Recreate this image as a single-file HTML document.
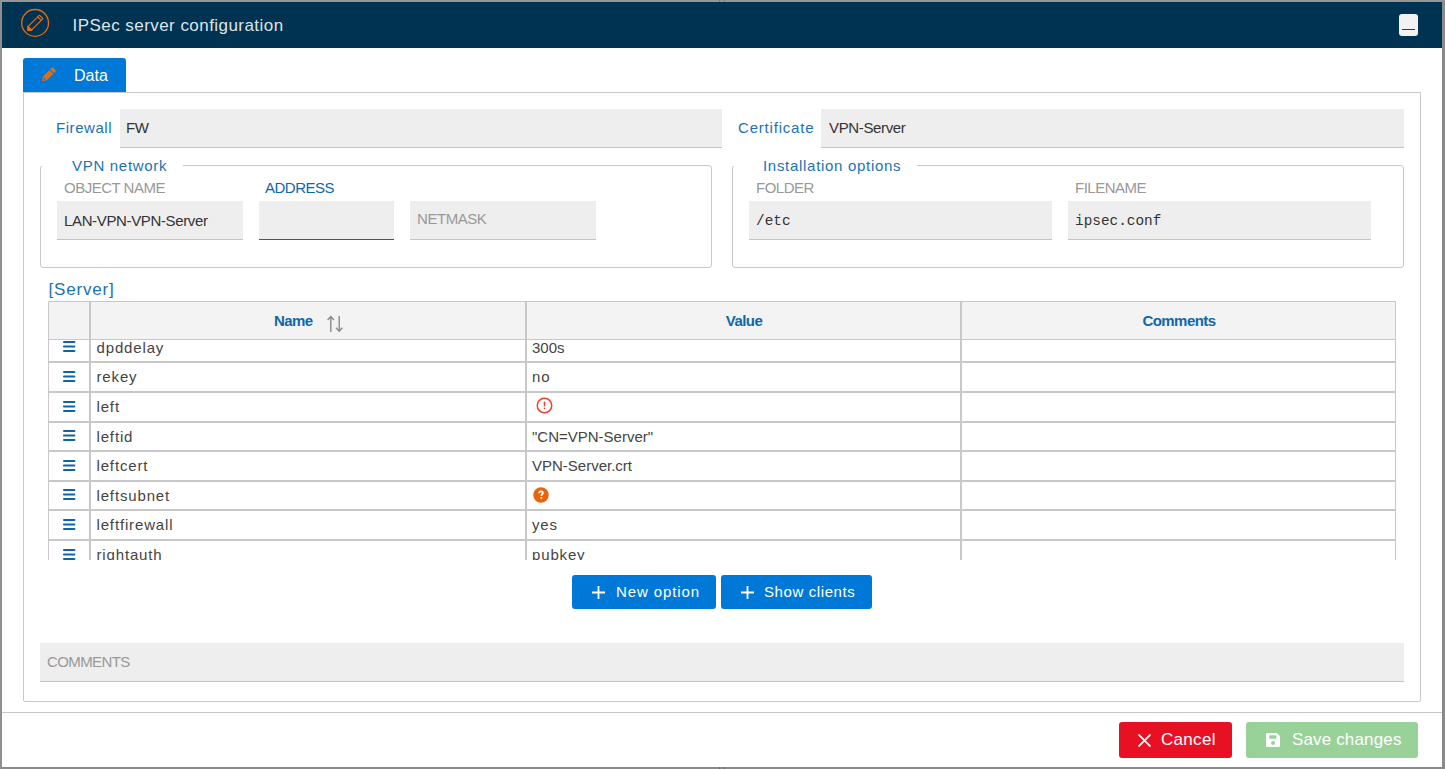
<!DOCTYPE html>
<html><head><meta charset="utf-8">
<style>
*{box-sizing:border-box;margin:0;padding:0}
html,body{width:1445px;height:769px;overflow:hidden;background:#fff;font-family:"Liberation Sans",sans-serif}
.abs{position:absolute}
#frame{position:absolute;left:0;top:0;width:1445px;height:769px;border-left:2px solid #8f8f8f;border-top:2px solid #959595;border-right:3px solid #8a8a8a;border-bottom:2px solid #8a8a8a;background:#fff}
#hdr{position:absolute;left:2px;top:2px;width:1440px;height:46px;background:#003252}
.title{position:absolute;left:72.5px;top:16px;color:#dfe4e8;font-size:17px;letter-spacing:0.45px;white-space:nowrap}
.minbtn{position:absolute;left:1397px;top:12px;width:19px;height:22px;background:#f2f2f2;border-radius:3px}
.minbtn i{position:absolute;left:3px;top:14.5px;width:13px;height:1.5px;background:#3a3a3a}
.tab{position:absolute;left:23px;top:58px;width:103px;height:34px;background:#0078d7;border-radius:3px 3px 0 0;color:#fff;font-size:16px}
.panel{position:absolute;left:23px;top:92px;width:1398px;height:610px;border:1px solid #c8c8c8;border-radius:0 0 2px 2px}
.lbl{position:absolute;color:#1a73b3;font-size:15px;white-space:nowrap}
.inp{position:absolute;background:#eee;border-bottom:1px solid #c4c4c4;font-size:15px;letter-spacing:-0.36px;color:#333;white-space:nowrap}
.inp.mono{font-size:14.4px;letter-spacing:0}
.fs{position:absolute;border:1px solid #c8c8c8;border-radius:3px}
.legend{position:absolute;background:#fff;color:#1a73b3;font-size:15px;letter-spacing:0.7px;white-space:nowrap;height:9px;line-height:17px;overflow:visible}
.sm{position:absolute;color:#999;font-size:15px;letter-spacing:-0.5px;white-space:nowrap}
.mono{font-family:"Liberation Mono",monospace}
.thead{position:absolute;left:48px;top:301px;width:1348px;height:39px;background:#f3f3f3;border:1px solid #c8c8c8}
.th{position:absolute;top:-1px;height:37px;color:#0e67ab;font-weight:bold;font-size:15px;letter-spacing:-0.55px;text-align:center;line-height:39px}
.vsep{position:absolute;width:2px;background:#c8c8c8}
.tbody{position:absolute;left:48px;top:340px;width:1348px;height:219.5px;overflow:hidden;border-left:1px solid #c8c8c8;border-right:1px solid #c8c8c8}
.row{position:absolute;left:0;width:1346px;height:29.62px;border-top:2px solid #c8c8c8}
.ham{position:absolute;left:14px;top:7.6px;fill:#0d64ab}
.ham i{display:block;height:1.7px;background:#0f64aa;margin-bottom:3px}
.cn{position:absolute;left:47.5px;top:4px;font-size:15px;letter-spacing:0.85px;color:#444;white-space:nowrap;line-height:20px}
.cv{position:absolute;left:483px;top:4px;font-size:15px;color:#444;white-space:nowrap;line-height:20px}
.cv.lc{letter-spacing:0.85px}
.btn{position:absolute;border-radius:3px;color:#fff;white-space:nowrap}
</style></head><body>
<div id="frame"></div>
<div id="hdr"></div>
<div class="abs" style="left:719px;top:0;width:1px;height:2px;background:#7a7a7a"></div>
<div class="abs" style="left:724px;top:0;width:1px;height:2px;background:#7a7a7a"></div>
<div class="abs" style="left:719px;top:767px;width:1px;height:2px;background:#6e6e6e"></div>
<div class="abs" style="left:724px;top:767px;width:1px;height:2px;background:#6e6e6e"></div>
<svg class="abs" style="left:0;top:0" width="60" height="48" viewBox="0 0 60 48">
  <circle cx="35.1" cy="22.9" r="13.4" fill="none" stroke="#eb6a0a" stroke-width="1.3"/>
  <g transform="translate(35.1,23) rotate(-45)">
    <path d="M-7.3,-2.5 H8 a0.6,0.6 0 0 1 0.6,0.6 V1.9 a0.6,0.6 0 0 1 -0.6,0.6 H-7.3 Z" fill="none" stroke="#eb6a0a" stroke-width="1.2"/>
    <path d="M6.1,-2.5 V2.5" stroke="#eb6a0a" stroke-width="1.1"/>
    <path d="M-7.3,-3.9 V3.9 L-11.2,0 Z" fill="#eb6a0a"/>
  </g>
</svg>
<div class="title">IPSec server configuration</div>
<div class="minbtn" style="left:1399px;top:14px"><i></i></div>
<div class="tab">
  <svg class="abs" style="left:0;top:0" width="50" height="34" viewBox="23 58 50 34">
    <g transform="translate(48.85,74.45) rotate(-45)">
      <path d="M-9.7,0 L-5.3,-2.7 H3.6 V2.7 H-5.3 Z" fill="#eb6a0a"/>
      <path d="M-7.7,0 L-5.6,-1.2 V1.2 Z" fill="#0078d7"/>
      <path d="M4.6,-2.7 H6.6 Q7.9,-2.7 7.9,-1.4 V1.4 Q7.9,2.7 6.6,2.7 H4.6 Z" fill="#eb6a0a"/>
    </g>
  </svg>
  <span class="abs" style="left:51px;top:9px">Data</span>
</div>
<div class="panel"></div>

<div class="lbl" style="left:56px;top:119px;letter-spacing:0.55px">Firewall</div>
<div class="inp" style="left:120px;top:109px;width:602px;height:39px"><span class="abs" style="left:6px;top:9.5px">FW</span></div>
<div class="lbl" style="left:738px;top:119px;letter-spacing:0.8px">Certificate</div>
<div class="inp" style="left:821px;top:109px;width:583px;height:39px"><span class="abs" style="left:8px;top:9.5px">VPN-Server</span></div>

<div class="fs" style="left:40px;top:165px;width:672px;height:103px"></div>
<div class="legend" style="left:39px;top:157px;padding-left:33px;padding-right:16px">VPN network</div>
<div class="sm" style="left:64px;top:179px">OBJECT NAME</div>
<div class="inp" style="left:57px;top:201px;width:186px;height:39px"><span class="abs" style="left:7px;top:10.5px">LAN-VPN-VPN-Server</span></div>
<div class="sm" style="left:265px;top:179px;color:#0e67ab">ADDRESS</div>
<div class="inp" style="left:259px;top:201px;width:135px;height:39px;border-bottom:1px solid #0e67ab"></div>
<div class="inp" style="left:410px;top:201px;width:186px;height:39px"><span class="abs" style="left:7px;top:9px;color:#999;font-size:15px;letter-spacing:-0.45px">NETMASK</span></div>

<div class="fs" style="left:732px;top:165px;width:672px;height:103px"></div>
<div class="legend" style="left:731px;top:157px;padding-left:32px;padding-right:16px">Installation options</div>
<div class="sm" style="left:756px;top:179px">FOLDER</div>
<div class="inp mono" style="left:749px;top:201px;width:303px;height:39px"><span class="abs" style="left:7px;top:12px">/etc</span></div>
<div class="sm" style="left:1075px;top:179px">FILENAME</div>
<div class="inp mono" style="left:1068px;top:201px;width:303px;height:39px"><span class="abs" style="left:7px;top:12px">ipsec.conf</span></div>

<div class="abs" style="left:48.5px;top:279.5px;color:#1a72b2;font-size:17px;letter-spacing:0.8px;white-space:nowrap">[Server]</div>

<div class="thead">
  <div class="th" style="left:225px;width:auto;text-align:left;top:-1px">Name</div>
  <svg class="abs" style="left:276.5px;top:12.8px" width="18" height="18" viewBox="0 0 18 18"><path d="M4.8 17V1.8M1.6 5L4.8 1.6L8 5" fill="none" stroke="#8a8a8a" stroke-width="1.4"/><path d="M13.2 1V16.2M10 12.8L13.2 16.2L16.4 12.8" fill="none" stroke="#8a8a8a" stroke-width="1.4"/></svg>
  <div class="th" style="left:478px;width:434px">Value</div>
  <div class="th" style="left:913px;width:434px">Comments</div>
  <div class="vsep" style="left:40px;top:0;height:37px"></div>
  <div class="vsep" style="left:476px;top:0;height:37px"></div>
  <div class="vsep" style="left:911px;top:0;height:37px"></div>
</div>
<div class="tbody">
<div class="row" style="top:-8.32px"><svg class="ham" width="13" height="12" viewBox="0 0 13 12"><rect x="0" y="0" width="12.4" height="2" rx="0.9"/><rect x="0" y="4.5" width="12.4" height="2" rx="0.9"/><rect x="0" y="9" width="12.4" height="2" rx="0.9"/></svg><div class="cn">dpddelay</div>
<div class="cv">300s</div>
</div>
<div class="row" style="top:21.30px"><svg class="ham" width="13" height="12" viewBox="0 0 13 12"><rect x="0" y="0" width="12.4" height="2" rx="0.9"/><rect x="0" y="4.5" width="12.4" height="2" rx="0.9"/><rect x="0" y="9" width="12.4" height="2" rx="0.9"/></svg><div class="cn">rekey</div>
<div class="cv lc">no</div>
</div>
<div class="row" style="top:50.92px"><svg class="ham" width="13" height="12" viewBox="0 0 13 12"><rect x="0" y="0" width="12.4" height="2" rx="0.9"/><rect x="0" y="4.5" width="12.4" height="2" rx="0.9"/><rect x="0" y="9" width="12.4" height="2" rx="0.9"/></svg><div class="cn">left</div>
<svg class="abs" style="left:486.8px;top:4.5px" width="17" height="17" viewBox="0 0 17 17"><circle cx="8.5" cy="8.5" r="7.25" fill="none" stroke="#ee4035" stroke-width="1.5"/><rect x="7.75" y="4.6" width="1.5" height="5" rx="0.7" fill="#ee4035"/><rect x="7.75" y="10.6" width="1.5" height="1.7" rx="0.7" fill="#ee4035"/></svg>
</div>
<div class="row" style="top:80.54px"><svg class="ham" width="13" height="12" viewBox="0 0 13 12"><rect x="0" y="0" width="12.4" height="2" rx="0.9"/><rect x="0" y="4.5" width="12.4" height="2" rx="0.9"/><rect x="0" y="9" width="12.4" height="2" rx="0.9"/></svg><div class="cn">leftid</div>
<div class="cv">"CN=VPN-Server"</div>
</div>
<div class="row" style="top:110.16px"><svg class="ham" width="13" height="12" viewBox="0 0 13 12"><rect x="0" y="0" width="12.4" height="2" rx="0.9"/><rect x="0" y="4.5" width="12.4" height="2" rx="0.9"/><rect x="0" y="9" width="12.4" height="2" rx="0.9"/></svg><div class="cn">leftcert</div>
<div class="cv">VPN-Server.crt</div>
</div>
<div class="row" style="top:139.78px"><svg class="ham" width="13" height="12" viewBox="0 0 13 12"><rect x="0" y="0" width="12.4" height="2" rx="0.9"/><rect x="0" y="4.5" width="12.4" height="2" rx="0.9"/><rect x="0" y="9" width="12.4" height="2" rx="0.9"/></svg><div class="cn">leftsubnet</div>
<svg class="abs" style="left:484px;top:5.05px" width="16" height="16" viewBox="0 0 16 16"><circle cx="8" cy="8" r="7.75" fill="#e8650a"/><path d="M6.1,6.3 C6.1,5 7,4.3 8,4.3 C9.1,4.3 9.9,5 9.9,6 C9.9,7.2 8.4,7.3 8.4,8.9" fill="none" stroke="#fff" stroke-width="1.7"/><rect x="7.4" y="10.1" width="1.9" height="1.7" rx="0.5" fill="#fff"/></svg>
</div>
<div class="row" style="top:169.40px"><svg class="ham" width="13" height="12" viewBox="0 0 13 12"><rect x="0" y="0" width="12.4" height="2" rx="0.9"/><rect x="0" y="4.5" width="12.4" height="2" rx="0.9"/><rect x="0" y="9" width="12.4" height="2" rx="0.9"/></svg><div class="cn">leftfirewall</div>
<div class="cv lc">yes</div>
</div>
<div class="row" style="top:199.02px"><svg class="ham" width="13" height="12" viewBox="0 0 13 12"><rect x="0" y="0" width="12.4" height="2" rx="0.9"/><rect x="0" y="4.5" width="12.4" height="2" rx="0.9"/><rect x="0" y="9" width="12.4" height="2" rx="0.9"/></svg><div class="cn">rightauth</div>
<div class="cv lc">pubkey</div>
</div>
  <div class="vsep" style="left:40px;top:0;height:220px"></div>
  <div class="vsep" style="left:476px;top:0;height:220px"></div>
  <div class="vsep" style="left:911px;top:0;height:220px"></div>
</div>

<div class="btn" style="left:572px;top:575px;width:144px;height:34px;background:#0078d7">
  <svg class="abs" style="left:20px;top:11px" width="13" height="13" viewBox="0 0 13 13"><path d="M6.5 0V13M0 6.5H13" stroke="#fff" stroke-width="1.8"/></svg>
  <span class="abs" style="left:44px;top:8px;font-size:15px;letter-spacing:0.9px">New option</span>
</div>
<div class="btn" style="left:721px;top:575px;width:151px;height:34px;background:#0078d7">
  <svg class="abs" style="left:20px;top:11px" width="13" height="13" viewBox="0 0 13 13"><path d="M6.5 0V13M0 6.5H13" stroke="#fff" stroke-width="1.8"/></svg>
  <span class="abs" style="left:43px;top:8px;font-size:15px;letter-spacing:0.6px">Show clients</span>
</div>

<div class="inp" style="left:40px;top:643px;width:1364px;height:39px"><span class="abs" style="left:7px;top:9.5px;color:#999;font-size:15px;letter-spacing:-0.6px">COMMENTS</span></div>

<div class="abs" style="left:2px;top:712px;width:1440px;height:1px;background:#c8c8c8"></div>
<div class="btn" style="left:1119px;top:722px;width:113px;height:36px;background:#e81123">
  <svg class="abs" style="left:19px;top:12px" width="13" height="13" viewBox="0 0 13 13"><path d="M0.5 0.5L12.5 12.5M12.5 0.5L0.5 12.5" stroke="#fff" stroke-width="1.8"/></svg>
  <span class="abs" style="left:42px;top:8px;font-size:17px;letter-spacing:0.3px">Cancel</span>
</div>
<div class="btn" style="left:1246px;top:722px;width:172px;height:36px;background:#98d298">
  <svg class="abs" style="left:20px;top:11px" width="14" height="14" viewBox="0 0 14 14"><path d="M1.2,0 H10.8 L14,3.2 V12.8 Q14,14 12.8,14 H1.2 Q0,14 0,12.8 V1.2 Q0,0 1.2,0 Z M4,2.2 H9.6 Q10.4,2.2 10.4,3 V5 Q10.4,5.8 9.6,5.8 H4 Q3.2,5.8 3.2,5 V3 Q3.2,2.2 4,2.2 Z M7,8 A2,2 0 1 0 7,12 A2,2 0 1 0 7,8 Z" fill="#fff" fill-rule="evenodd"/></svg>
  <span class="abs" style="left:46px;top:8px;font-size:17px;letter-spacing:0.15px">Save changes</span>
</div>
</body></html>
